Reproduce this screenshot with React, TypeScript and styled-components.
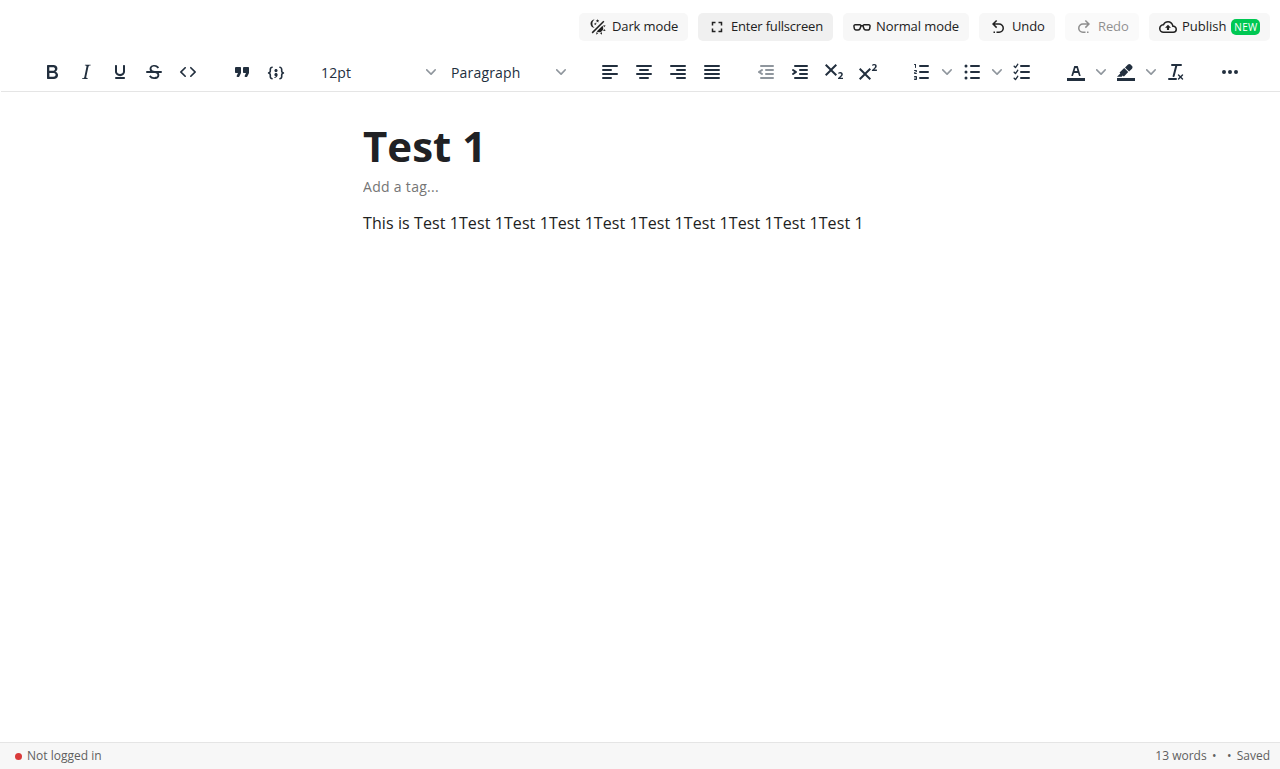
import React from "react";
import styled, { createGlobalStyle } from "styled-components";

const GlobalStyle = createGlobalStyle`
  * { box-sizing: border-box; }
  body { margin: 0; background: #fff; font-family: "Open Sans", sans-serif; color: #212121; }
  button, input { font-family: inherit; }
`;

const Page = styled.div`
  display: flex;
  flex-direction: column;
  height: 769px;
  background: #fff;
`;

const Header = styled.header`
  display: flex;
  justify-content: flex-end;
  gap: 10px;
  height: 52px;
  padding: 13px 10px 0 0;
`;

const ActionButton = styled.button<{ $width: number; $tracking: number; $hovered?: boolean }>`
  display: flex;
  align-items: center;
  gap: 5px;
  width: ${(p) => p.$width}px;
  height: 28px;
  padding: 0 0 0 10px;
  border: 0;
  border-radius: 5px;
  background: ${(p) => (p.$hovered ? "#f0f0f0" : "#f7f7f7")};
  color: #212121;
  font-size: 13px;
  line-height: 18px;
  letter-spacing: ${(p) => p.$tracking}px;
  white-space: nowrap;
  &:disabled { opacity: 0.5; }
`;

const ActionLabel = styled.span`
  padding-bottom: 2px;
`;

const Badge = styled.span`
  width: 29px;
  height: 16px;
  border-radius: 5px;
  background: #00c853;
  color: #fff;
  font-size: 10px;
  line-height: 17px;
  letter-spacing: 0.3px;
  text-align: center;
`;

const Toolbar = styled.div`
  display: flex;
  gap: 20px;
  height: 40px;
  margin-left: 1px;
  padding: 3px 0 0 34px;
  border-bottom: 1px solid #e5e5e5;
  color: #222f3e;
`;

const Group = styled.div`
  display: flex;
`;

const Tool = styled.button<{ $split?: boolean }>`
  display: flex;
  align-items: center;
  width: ${(p) => (p.$split ? 50 : 34)}px;
  height: 34px;
  padding: 0 0 0 5px;
  border: 0;
  background: none;
  color: inherit;
  &:disabled { opacity: 0.5; }
`;

const SelectBox = styled.button`
  display: flex;
  align-items: center;
  justify-content: space-between;
  width: 130px;
  height: 34px;
  padding: 0 7px 0 8px;
  border: 0;
  background: none;
  color: #222f3e;
  font-size: 14px;
  line-height: 20px;
  letter-spacing: 0.17px;
`;

const SelectLabel = styled.span`
  padding-top: 2px;
`;

const Chevron = styled.svg<{ $split?: boolean }>`
  flex: none;
  width: 10px;
  height: 10px;
  margin-left: ${(p) => (p.$split ? 8 : 0)}px;
  fill: currentColor;
  opacity: 0.5;
`;

const Glyph = styled.svg<{ $size: number }>`
  flex: none;
  width: ${(p) => p.$size}px;
  height: ${(p) => p.$size}px;
  fill: currentColor;
`;

const Editor = styled.main`
  flex: 1;
  width: 554px;
  margin: 0 auto;
  padding-top: 25px;
`;

const Title = styled.h1`
  margin: 0;
  font-size: 42px;
  font-weight: 700;
  line-height: 58px;
  color: #202124;
`;

const TagInput = styled.input`
  display: block;
  width: 200px;
  height: 22px;
  padding: 0;
  border: 0;
  outline: 0;
  font-size: 14px;
  letter-spacing: 0.3px;
  &::placeholder { color: #757575; opacity: 1; }
`;

const Paragraph = styled.p`
  margin: 15px 0 0;
  font-size: 16px;
  line-height: 22px;
  letter-spacing: 0.09px;
`;

const StatusBar = styled.footer`
  display: flex;
  justify-content: space-between;
  align-items: center;
  height: 27px;
  padding: 0 10px 0 15px;
  border-top: 1px solid #e5e5e5;
  background: #f7f7f7;
  color: #5f5f5f;
  font-size: 12px;
  line-height: 16px;
`;

const StatusGroup = styled.div`
  display: flex;
  align-items: center;
  gap: 5px;
`;

const Separator = styled.span`
  width: 5px;
  margin-right: 5px;
  text-align: center;
  & + & { margin-right: 0; }
`;

const Dot = styled.span`
  width: 7px;
  height: 7px;
  margin-top: 1px;
  border-radius: 50%;
  background: #d93a3a;
`;

const bar = (x: number, y: number, w: number) =>
  `M${x + 1} ${y}h${w - 2}a1 1 0 0 1 0 2h-${w - 2}a1 1 0 0 1 0-2Z`;

const check = (y: number) =>
  `M7.2 ${y}c.2-.4.6-.5.9-.3.3.2.4.6.2 1L6 ${y + 4}c-.2.3-.7.4-1 0l-1.3-1.3a.7.7 0 0 1 0-1c.3-.2.7-.2 1 0l.7.9 1.8-2.6Z`;

const disc = (x: number, y: number, r: number) =>
  `M${x - r} ${y}a${r} ${r} 0 1 0 ${2 * r} 0a${r} ${r} 0 1 0 -${2 * r} 0Z`;

const icons = {
  theme:
    "M7.5,2C5.71,3.15 4.5,5.18 4.5,7.5C4.5,9.82 5.71,11.85 7.53,13C4.46,13 2,10.54 2,7.5A5.5,5.5 0 0,1 7.5,2M19.07,3.5L20.5,4.93L4.93,20.5L3.5,19.07L19.07,3.5M12.89,5.93L11.41,5L9.97,6L10.39,4.3L9,3.24L10.75,3.12L11.33,1.47L12,3.1L13.73,3.13L12.38,4.26L12.89,5.93M9.59,9.54L8.43,8.81L7.31,9.59L7.65,8.27L6.56,7.44L7.92,7.35L8.37,6.06L8.88,7.33L10.24,7.36L9.19,8.23L9.59,9.54M19,13.5A5.5,5.5 0 0,1 13.5,19C12.28,19 11.15,18.6 10.24,17.93L17.93,10.24C18.6,11.15 19,12.28 19,13.5M14.6,20.08L17.37,18.93L17.13,22.28L14.6,20.08M18.93,17.38L20.08,14.61L22.28,17.15L18.93,17.38M20.08,12.42L18.94,9.64L22.28,9.88L20.08,12.42M9.63,18.93L12.4,20.08L9.87,22.27L9.63,18.93Z",
  fullscreen:
    "M5,5H10V7H7V10H5V5M14,5H19V10H17V7H14V5M17,14H19V19H14V17H17V14M10,17V19H5V14H7V17H10Z",
  glasses:
    "M3,10C2.76,10 2.55,10.09 2.41,10.25C2.27,10.4 2.21,10.62 2.24,10.86L2.74,13.85C2.82,14.5 3.4,15 4,15H7C7.64,15 8.36,14.44 8.5,13.82L9.56,10.63C9.6,10.5 9.57,10.31 9.5,10.19C9.39,10.07 9.22,10 9,10H3M7,17H4C2.38,17 0.96,15.74 0.76,14.14L0.26,11.15C0.15,10.3 0.39,9.5 0.91,8.92C1.43,8.34 2.19,8 3,8H9C9.83,8 10.58,8.35 11.06,8.96C11.17,9.11 11.27,9.27 11.35,9.45C11.78,9.36 12.22,9.36 12.64,9.45C12.72,9.27 12.82,9.11 12.94,8.96C13.41,8.35 14.16,8 15,8H21C21.81,8 22.57,8.34 23.09,8.92C23.6,9.5 23.84,10.3 23.74,11.11L23.23,14.18C23.04,15.74 21.61,17 20,17H17C15.44,17 13.92,15.81 13.54,14.3L12.64,11.59C12.26,11.31 11.73,11.31 11.35,11.59L10.43,14.37C10.07,15.82 8.56,17 7,17M15,10C14.78,10 14.6,10.07 14.5,10.19C14.42,10.31 14.4,10.5 14.45,10.7L15.46,13.75C15.64,14.44 16.36,15 17,15H20C20.59,15 21.18,14.5 21.25,13.89L21.76,10.82C21.79,10.62 21.73,10.4 21.59,10.25C21.45,10.09 21.24,10 21,10H15Z",
  undo:
    "M13.5,7A6.5,6.5 0 0,1 20,13.5A6.5,6.5 0 0,1 13.5,20H10V18H13.5C16,18 18,16 18,13.5C18,11 16,9 13.5,9H7.83L10.91,12.09L9.5,13.5L4,8L9.5,2.5L10.92,3.91L7.83,7H13.5M6,18H8V20H6V18Z",
  redo:
    "M10.5,7A6.5,6.5 0 0,0 4,13.5A6.5,6.5 0 0,0 10.5,20H14V18H10.5C8,18 6,16 6,13.5C6,11 8,9 10.5,9H16.17L13.09,12.09L14.5,13.5L20,8L14.5,2.5L13.08,3.91L16.17,7H10.5M18,18H16V20H18V18Z",
  publish:
    "M19.35,10.04C18.67,6.59 15.64,4 12,4C9.11,4 6.6,5.64 5.35,8.04C2.34,8.36 0,10.9 0,14A6,6 0 0,0 6,20H19A5,5 0 0,0 24,15C24,12.36 21.95,10.22 19.35,10.04M19,18H6A4,4 0 0,1 2,14C2,11.95 3.53,10.24 5.56,10.03L6.63,9.92L7.13,8.97C8.08,7.14 9.94,6 12,6C14.62,6 16.88,7.86 17.39,10.43L17.69,11.93L19.22,12.04C20.78,12.14 22,13.45 22,15A3,3 0 0,1 19,18M8,13H10.55V16H13.45V13H16L12,9L8,13Z",
  bold:
    "M7.8 19c-.3 0-.5 0-.6-.2l-.2-.5V5.7c0-.2 0-.4.2-.5l.6-.2h5c1.5 0 2.7.3 3.5 1 .7.6 1.1 1.4 1.1 2.5a3 3 0 0 1-.6 1.9c-.4.6-1 1-1.6 1.2.4.1.9.3 1.3.6s.8.7 1 1.2c.4.4.5 1 .5 1.6 0 1.3-.4 2.3-1.3 3-.8.7-2.1 1-3.8 1H7.8Zm5-8.3c.6 0 1.2-.1 1.6-.5.4-.3.6-.7.6-1.3 0-1.1-.8-1.7-2.3-1.7H9.3v3.5h3.4Zm.5 6c.7 0 1.3-.1 1.7-.4.4-.4.6-.9.6-1.5s-.2-1-.7-1.4c-.4-.3-1-.4-2-.4H9.4v3.8h4Z",
  italic:
    "m16.7 4.7-.1.9h-.3c-.6 0-1 0-1.4.3-.3.3-.4.6-.5 1.1l-2.1 9.8v.6c0 .5.4.8 1.4.8h.2l-.2.8H8l.2-.8h.2c1.1 0 1.8-.5 2-1.5l2-9.8.1-.5c0-.6-.4-.8-1.4-.8h-.3l.2-.9h5.8Z",
  underline:
    "M16 5c.6 0 1 .4 1 1v5.5a4 4 0 0 1-.4 1.8l-1 1.4a5.3 5.3 0 0 1-5.5 1 5 5 0 0 1-1.6-1c-.5-.4-.8-.9-1.1-1.4a4 4 0 0 1-.4-1.8V6c0-.6.4-1 1-1s1 .4 1 1v5.5c0 .3 0 .6.2 1l.6.7a3.3 3.3 0 0 0 2.2.8 3.4 3.4 0 0 0 2.2-.8c.3-.2.4-.5.6-.8l.2-.9V6c0-.6.4-1 1-1ZM8 17h8c.6 0 1 .4 1 1s-.4 1-1 1H8a1 1 0 0 1 0-2Z",
  strike:
    "M15.6 8.5c-.5-.7-1-1.1-1.3-1.3-.6-.4-1.3-.6-2-.6-2.7 0-2.8 1.7-2.8 2.1 0 1.6 1.8 2 3.2 2.3 4.4.9 4.6 2.8 4.6 3.9 0 1.4-.7 4.1-5 4.1A6.2 6.2 0 0 1 7 16.4l1.5-1.1c.4.6 1.6 2 3.7 2 1.6 0 2.5-.4 3-1.2.4-.8.3-2-.8-2.6-.7-.4-1.6-.7-2.9-1-1-.2-3.9-.8-3.9-3.6C7.6 6 10.3 5 12.4 5c2.9 0 4.2 1.6 4.7 2.4l-1.5 1.1ZM5 11h14a1 1 0 0 1 0 2H5a1 1 0 0 1 0-2Z",
  code:
    "M9.8 15.7c.3.3.3.8 0 1-.3.4-.9.4-1.2 0l-4.4-4.1a.8.8 0 0 1 0-1.2l4.4-4.2c.3-.3.9-.3 1.2 0 .3.3.3.8 0 1.1L6 12l3.8 3.7ZM14.2 15.7c-.3.3-.3.8 0 1 .4.4.9.4 1.2 0l4.4-4.1c.3-.3.3-.9 0-1.2l-4.4-4.2a.8.8 0 0 0-1.2 0c-.3.3-.3.8 0 1.1L18 12l-3.8 3.7Z",
  quote:
    "M7.5 17h.9c.4 0 .7-.2.9-.6L11 13V8c0-.6-.4-1-1-1H6a1 1 0 0 0-1 1v4c0 .6.4 1 1 1h2l-1.3 2.7a1 1 0 0 0 .8 1.3Zm8 0h.9c.4 0 .7-.2.9-.6L19 13V8c0-.6-.4-1-1-1h-4a1 1 0 0 0-1 1v4c0 .6.4 1 1 1h2l-1.3 2.7a1 1 0 0 0 .8 1.3Z",
  codeSample:
    "M7.1 11a2.8 2.8 0 0 1-.8 2 2.8 2.8 0 0 1 .8 2v1.7c0 .3.1.6.4.8.2.3.5.4.8.4.3 0 .4.2.4.4v.8c0 .2-.1.4-.4.4-.7 0-1.4-.3-2-.8-.5-.6-.8-1.3-.8-2V15c0-.3-.1-.6-.4-.8-.2-.3-.5-.4-.8-.4a.4.4 0 0 1-.4-.4v-.8c0-.2.2-.4.4-.4.3 0 .6-.1.8-.4.3-.2.4-.5.4-.8V9.3c0-.7.3-1.4.8-2 .6-.5 1.3-.8 2-.8.3 0 .4.2.4.4v.8c0 .2-.1.4-.4.4-.3 0-.6.1-.8.4-.3.2-.4.5-.4.8V11Zm9.8 0V9.3c0-.3-.1-.6-.4-.8-.2-.3-.5-.4-.8-.4a.4.4 0 0 1-.4-.4V7c0-.2.1-.4.4-.4.7 0 1.4.3 2 .8.5.6.8 1.3.8 2V11c0 .3.1.6.4.8.2.3.5.4.8.4.2 0 .4.2.4.4v.8c0 .2-.2.4-.4.4-.3 0-.6.1-.8.4-.3.2-.4.5-.4.8v1.7c0 .7-.3 1.4-.8 2-.6.5-1.3.8-2 .8a.4.4 0 0 1-.4-.4v-.8c0-.2.1-.4.4-.4.3 0 .6-.1.8-.4.3-.2.4-.5.4-.8V15a2.8 2.8 0 0 1 .8-2 2.8 2.8 0 0 1-.8-2Zm-3.3-.4c0 .4-.1.8-.5 1.1-.3.3-.7.5-1.1.5-.4 0-.8-.2-1.1-.5-.4-.3-.5-.7-.5-1.1 0-.5.1-.9.5-1.2.3-.3.7-.4 1.1-.4.4 0 .8.1 1.1.4.4.3.5.7.5 1.2ZM12 13c.4 0 .8.1 1.1.5.4.3.5.7.5 1.1 0 1-.1 1.6-.5 2a3 3 0 0 1-1.1 1c-.4.3-.8.4-1.1.4a.5.5 0 0 1-.5-.5V17a3 3 0 0 0 1-.2l.6-.6c-.6 0-1-.2-1.3-.5-.2-.3-.3-.7-.3-1 0-.5.1-1 .5-1.2.3-.4.7-.5 1.1-.5Z",
  alignLeft: bar(4, 5, 16) + bar(4, 9, 10) + bar(4, 13, 16) + bar(4, 17, 10),
  alignCenter: bar(4, 5, 16) + bar(7, 9, 10) + bar(4, 13, 16) + bar(7, 17, 10),
  alignRight: bar(4, 5, 16) + bar(10, 9, 10) + bar(4, 13, 16) + bar(10, 17, 10),
  justify: bar(4, 5, 16) + bar(4, 9, 16) + bar(4, 13, 16) + bar(4, 17, 16),
  outdent:
    bar(6, 5, 14) + bar(11, 9, 9) + bar(11, 13, 9) + bar(6, 17, 14) +
    "M8.6 13.2a1 1 0 0 1-1.2 1.6l-3-2a1 1 0 0 1 0-1.6l3-2a1 1 0 0 1 1.2 1.6L6.8 12l1.8 1.2Z",
  indent:
    bar(6, 5, 14) + bar(11, 9, 9) + bar(11, 13, 9) + bar(6, 17, 14) +
    "M4.4 13.2 6.2 12l-1.8-1.2a1 1 0 0 1 1.2-1.6l3 2a1 1 0 0 1 0 1.6l-3 2a1 1 0 1 1-1.2-1.6Z",
  subscript:
    "m10.4 10 4.6 4.6-1.4 1.4L9 11.4 4.4 16 3 14.6 7.6 10 3 5.4 4.4 4 9 8.6 13.6 4 15 5.4 10.4 10ZM21 19h-5v-1l1-.8 1.7-1.6c.3-.4.5-.8.5-1.2 0-.3 0-.6-.2-.7-.2-.2-.5-.3-.9-.3a2 2 0 0 0-.8.2l-.7.3-.4-1.1 1-.6 1.2-.2c.8 0 1.4.3 1.8.7.4.4.6.9.6 1.5s-.2 1.1-.5 1.6a8 8 0 0 1-1.3 1.3l-.6.6h2.6V19Z",
  superscript:
    "M15 9.4 10.4 14l4.6 4.6-1.4 1.4L9 15.4 4.4 20 3 18.6 7.6 14 3 9.4 4.4 8 9 12.6 13.6 8 15 9.4Zm5.9 1.6h-5v-1l1-.8 1.7-1.6c.3-.5.5-.9.5-1.3 0-.3 0-.5-.2-.7-.2-.2-.5-.3-.9-.3l-.8.2-.7.4-.4-1.2c.2-.2.5-.4 1-.5.3-.2.8-.2 1.2-.2.8 0 1.4.2 1.8.6.4.4.6 1 .6 1.6 0 .5-.2 1-.5 1.5l-1.3 1.4-.6.5h2.6V11Z",
  ordered:
    bar(9, 5, 10) + bar(9, 11, 10) + bar(9, 17, 10) +
    "M6 4v3.5c0 .3-.2.5-.5.5a.5.5 0 0 1-.5-.5V5h-.5a.5.5 0 0 1 0-1H6Zm-1 8.8.2.2h1.3c.3 0 .5.2.5.5s-.2.5-.5.5H4.9a1 1 0 0 1-.9-1V13c0-.4.3-.8.6-1l1.2-.4.2-.3a.2.2 0 0 0-.2-.2H4.5a.5.5 0 0 1-.5-.5c0-.3.2-.5.5-.5h1.6c.5 0 .9.4.9 1v.1c0 .4-.3.8-.6 1l-1.2.4-.2.3ZM7 17v2c0 .6-.4 1-1 1H4.5a.5.5 0 0 1 0-1h1.2c.2 0 .3-.1.3-.3 0-.2-.1-.3-.3-.3H4.4a.4.4 0 1 1 0-.8h1.3c.2 0 .3-.1.3-.3 0-.2-.1-.3-.3-.3H4.5a.5.5 0 1 1 0-1H6c.6 0 1 .4 1 1Z",
  unordered:
    bar(10, 5, 10) + bar(10, 11, 10) + bar(10, 17, 10) +
    disc(6, 6, 1.5) + disc(6, 12, 1.5) + disc(6, 18, 1.5),
  checklist:
    bar(10, 5, 10) + bar(10, 11, 10) + bar(10, 17, 10) + check(4) + check(10) + check(16),
  textColor:
    "M3 18h18v3H3zM8.7 16h-.8a.5.5 0 0 1-.5-.6l2.7-9c.1-.3.3-.4.5-.4h2.8c.2 0 .4.1.5.4l2.7 9a.5.5 0 0 1-.5.6h-.8a.5.5 0 0 1-.4-.4l-.7-2.2c0-.3-.3-.4-.5-.4h-3.4c-.2 0-.4.1-.5.4l-.7 2.2c0 .3-.2.4-.4.4Zm2.6-7.6-.6 2a.5.5 0 0 0 .5.6h1.6a.5.5 0 0 0 .5-.6l-.6-2c0-.3-.3-.4-.5-.4h-.4c-.2 0-.4.1-.5.4Z",
  highlight:
    "M3 18h18v3H3zM7.7 16.7H3l3.3-3.3-.7-.8L10.2 8l4 4.1-4 4.2c-.2.2-.6.2-.8 0l-.6-.7-1.1 1.1Zm5-7.5L11 7.4l3-2.9a2 2 0 0 1 2.6 0L18 6c.7.7.7 2 0 2.7l-2.9 2.9-1.8-1.8-.5-.6",
  clear:
    "M13.2 6a1 1 0 0 1 0 .2l-2.6 10a1 1 0 0 1-1 .8h-.2a.8.8 0 0 1-.8-1l2.6-10H8a1 1 0 1 1 0-2h9a1 1 0 0 1 0 2h-3.8ZM5 18h7a1 1 0 0 1 0 2H5a1 1 0 0 1 0-2Zm13 1.5L16.5 18 15 19.5a.7.7 0 0 1-1-1l1.5-1.5-1.5-1.5a.7.7 0 0 1 1-1l1.5 1.5 1.5-1.5a.7.7 0 0 1 1 1L17.5 17l1.5 1.5a.7.7 0 0 1-1 1Z",
  more: disc(6, 12, 2) + disc(12, 12, 2) + disc(18, 12, 2),
};

type IconName = keyof typeof icons;

const Icon = ({ name, size = 24 }: { name: IconName; size?: number }) => (
  <Glyph $size={size} viewBox="0 0 24 24" aria-hidden="true">
    <path d={icons[name]} />
  </Glyph>
);

const Caret = ({ split }: { split?: boolean }) => (
  <Chevron $split={split} viewBox="0 0 10 10" aria-hidden="true">
    <path d="M8.7 2.2c.3-.3.8-.3 1 0 .4.4.4.9 0 1.2L5.7 7.8c-.3.3-.9.3-1.2 0L.2 3.4a.8.8 0 0 1 0-1.2c.3-.3.8-.3 1.1 0L5 6l3.7-3.8Z" />
  </Chevron>
);

interface ToolItem {
  icon: IconName;
  split?: boolean;
  disabled?: boolean;
}

const ToolGroup = ({ items }: { items: ToolItem[] }) => (
  <Group>
    {items.map(({ icon, split, disabled }) => (
      <Tool key={icon} $split={split} disabled={disabled} aria-label={icon}>
        <Icon name={icon} />
        {split && <Caret split />}
      </Tool>
    ))}
  </Group>
);

const actions: {
  icon: IconName;
  label: string;
  width: number;
  tracking: number;
  hovered?: boolean;
  disabled?: boolean;
  badge?: string;
}[] = [
  { icon: "theme", label: "Dark mode", width: 109, tracking: -0.12 },
  { icon: "fullscreen", label: "Enter fullscreen", width: 135, tracking: -0.19, hovered: true },
  { icon: "glasses", label: "Normal mode", width: 126, tracking: -0.09 },
  { icon: "undo", label: "Undo", width: 76, tracking: -0.15 },
  { icon: "redo", label: "Redo", width: 74, tracking: -0.1, disabled: true },
  { icon: "publish", label: "Publish", width: 121, tracking: 0, badge: "NEW" },
];

export default function App() {
  return (
    <Page>
      <GlobalStyle />
      <Header>
        {actions.map((a) => (
          <ActionButton
            key={a.label}
            $width={a.width}
            $tracking={a.tracking}
            $hovered={a.hovered}
            disabled={a.disabled}
          >
            <Icon name={a.icon} size={18} />
            <ActionLabel>{a.label}</ActionLabel>
            {a.badge && <Badge>{a.badge}</Badge>}
          </ActionButton>
        ))}
      </Header>
      <Toolbar>
        <ToolGroup
          items={[
            { icon: "bold" },
            { icon: "italic" },
            { icon: "underline" },
            { icon: "strike" },
            { icon: "code" },
          ]}
        />
        <ToolGroup items={[{ icon: "quote" }, { icon: "codeSample" }]} />
        <Group>
          <SelectBox>
            <SelectLabel>12pt</SelectLabel>
            <Caret />
          </SelectBox>
          <SelectBox>
            <SelectLabel>Paragraph</SelectLabel>
            <Caret />
          </SelectBox>
        </Group>
        <ToolGroup
          items={[
            { icon: "alignLeft" },
            { icon: "alignCenter" },
            { icon: "alignRight" },
            { icon: "justify" },
          ]}
        />
        <ToolGroup
          items={[
            { icon: "outdent", disabled: true },
            { icon: "indent" },
            { icon: "subscript" },
            { icon: "superscript" },
          ]}
        />
        <ToolGroup
          items={[
            { icon: "ordered", split: true },
            { icon: "unordered", split: true },
            { icon: "checklist" },
          ]}
        />
        <ToolGroup
          items={[
            { icon: "textColor", split: true },
            { icon: "highlight", split: true },
            { icon: "clear" },
          ]}
        />
        <ToolGroup items={[{ icon: "more" }]} />
      </Toolbar>
      <Editor>
        <Title>Test 1</Title>
        <TagInput placeholder="Add a tag..." />
        <Paragraph>This is Test 1Test 1Test 1Test 1Test 1Test 1Test 1Test 1Test 1Test 1</Paragraph>
      </Editor>
      <StatusBar>
        <StatusGroup>
          <Dot />
          <span>Not logged in</span>
        </StatusGroup>
        <StatusGroup>
          <span>13 words</span>
          <Separator>•</Separator>
          <Separator>•</Separator>
          <span>Saved</span>
        </StatusGroup>
      </StatusBar>
    </Page>
  );
}
